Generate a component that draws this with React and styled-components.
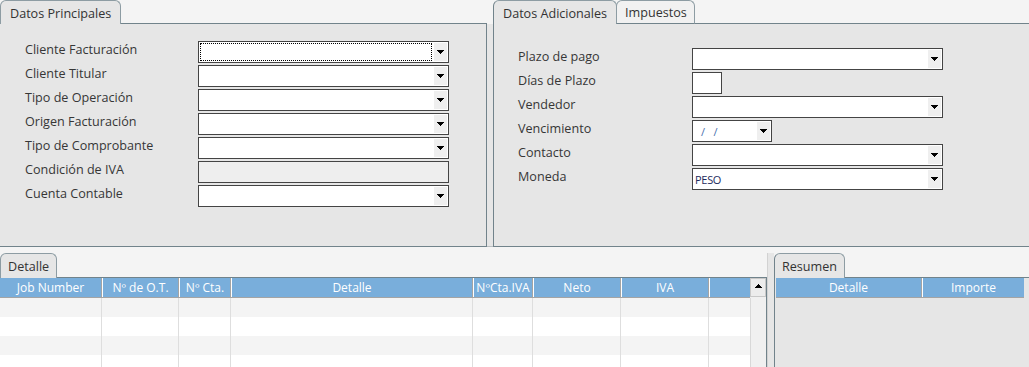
import React from "react";
import styled, { createGlobalStyle, css } from "styled-components";

const line = "#71838b";
const tabLine = "#8d9ca3";

const GlobalStyle = createGlobalStyle`
  html, body {
    margin: 0;
    padding: 0;
    background: #f4f4f4;
  }
  body {
    font-family: "Open Sans", "DejaVu Sans", sans-serif;
    font-size: 12.6px;
    color: #333;
    overflow: hidden;
  }
`;

const Arrow = ({ up }) => (
  <svg width="7" height="4" viewBox="0 0 7 4" shapeRendering="crispEdges"
    style={up ? { transform: "rotate(180deg)" } : undefined}>
    <path d="M0 0H7V1H6V2H5V3H4V4H3V3H2V2H1V1H0Z" fill="#000" />
  </svg>
);

export default function App() {
  const mainRows = [
    { label: "Cliente Facturación", focus: true },
    { label: "Cliente Titular" },
    { label: "Tipo de Operación" },
    { label: "Origen Facturación" },
    { label: "Tipo de Comprobante" },
    { label: "Condición de IVA", disabled: true },
    { label: "Cuenta Contable" },
  ];
  const extraRows = [
    { label: "Plazo de pago" },
    { label: "Días de Plazo", w: 30, plain: true },
    { label: "Vendedor" },
    { label: "Vencimiento", w: 80, value: "/   /", date: true },
    { label: "Contacto" },
    { label: "Moneda", value: "PESO" },
  ];
  const cols = [
    ["Job Number", 102],
    ["Nº de O.T.", 77],
    ["Nº Cta.", 52],
    ["Detalle", 242],
    ["NºCta.IVA", 60],
    ["Neto", 88],
    ["IVA", 88],
    ["", 41],
  ];
  const template = cols.map((c) => c[1] + "px").join(" ");

  return (
    <Page>
      <GlobalStyle />
      <TopRow>
        <Panel $width={487}>
          <TabStrip>
            <Tab $active>Datos Principales</Tab>
            <TabFill />
          </TabStrip>
          <Body $right>
            <Form $pad="17px 0 0 25px" $labelWidth={173}>
              {mainRows.map((r) => (
                <FieldRow key={r.label}>
                  <Label>{r.label}</Label>
                  <Field {...r} />
                </FieldRow>
              ))}
            </Form>
          </Body>
        </Panel>
        <Splitter />
        <Panel>
          <TabStrip>
            <Tab $active $edge>Datos Adicionales</Tab>
            <Tab>Impuestos</Tab>
            <TabFill />
          </TabStrip>
          <Body $left>
            <Form $pad="24px 0 0 24px" $labelWidth={174}>
              {extraRows.map((r) => (
                <FieldRow key={r.label}>
                  <Label>{r.label}</Label>
                  <Field {...r} />
                </FieldRow>
              ))}
            </Form>
          </Body>
        </Panel>
      </TopRow>

      <BottomRow>
        <Panel $width={767}>
          <TabStrip $tall>
            <Tab $active $compact>Detalle</Tab>
            <TabFill />
          </TabStrip>
          <GridBody>
            <TableArea>
              <HeadRow style={{ gridTemplateColumns: template }}>
                {cols.map(([t], i) => (
                  <HeadCell key={i} $first={i === 0}>{t}</HeadCell>
                ))}
              </HeadRow>
              {[0, 1, 2, 3, 4].map((r) => (
                <DataRow key={r} $odd={r % 2 === 1} style={{ gridTemplateColumns: template }}>
                  {cols.map((_, i) => (
                    <DataCell key={i} />
                  ))}
                </DataRow>
              ))}
            </TableArea>
            <ScrollBar>
              <ScrollButton>
                <Arrow up />
              </ScrollButton>
              <ScrollTrack />
            </ScrollBar>
          </GridBody>
        </Panel>
        <Splitter $bottom />
        <Panel>
          <TabStrip $tall>
            <Tab $active $edge $compact>Resumen</Tab>
            <TabFill />
          </TabStrip>
          <SummaryBody>
            <HeadRow style={{ gridTemplateColumns: "146px 102px", width: "248px" }}>
              <HeadCell $first>Detalle</HeadCell>
              <HeadCell>Importe</HeadCell>
            </HeadRow>
          </SummaryBody>
        </Panel>
      </BottomRow>
    </Page>
  );
}

function Field({ w = 251, focus, disabled, plain, value, date }) {
  return (
    <Box $w={w} $disabled={disabled}>
      <Value $focus={focus} $date={date}>{value}</Value>
      {!disabled && !plain && (
        <DropButton>
          <Arrow />
        </DropButton>
      )}
    </Box>
  );
}

const Page = styled.div`
  width: 1029px;
  height: 367px;
  display: flex;
  flex-direction: column;
  gap: 6px;
  overflow: hidden;
`;

const TopRow = styled.div`
  display: flex;
  height: 247px;
  flex: none;
`;

const BottomRow = styled.div`
  display: flex;
  flex: 1;
  min-height: 0;
`;

const Panel = styled.section`
  display: flex;
  flex-direction: column;
  width: ${(p) => (p.$width ? p.$width + "px" : "auto")};
  flex: ${(p) => (p.$width ? "none" : 1)};
  min-width: 0;
`;

const TabStrip = styled.div`
  display: flex;
  height: ${(p) => (p.$tall ? 25 : 24)}px;
  flex: none;
`;

const Tab = styled.div`
  box-sizing: border-box;
  height: 100%;
  padding: 1px ${(p) => (p.$compact ? 7 : p.$active ? 9 : 8)}px 0;
  display: flex;
  align-items: center;
  border: 1px solid ${tabLine};
  border-radius: 6px 6px 0 0;
  white-space: nowrap;
  font-size: 12.6px;
  color: #333;
  ${(p) =>
    p.$active
      ? css`
          background: #e6e6e6;
          border-bottom: none;
          ${p.$edge && css`border-left-color: ${line};`}
        `
      : css`
          background: #f1f1f1;
          border-bottom-color: ${line};
          margin-left: -1px;
          padding-right: 7px;
        `}
`;

const TabFill = styled.div`
  flex: 1;
  border-bottom: 1px solid ${line};
`;

const Body = styled.div`
  flex: 1;
  background: #e6e6e6;
  border-bottom: 1px solid ${line};
  ${(p) => p.$right && css`border-right: 1px solid ${line};`}
  ${(p) => p.$left && css`border-left: 1px solid ${line};`}
`;

const Splitter = styled.div`
  width: ${(p) => (p.$bottom ? 7 : 6)}px;
  flex: none;
  box-sizing: border-box;
  ${(p) =>
    p.$bottom
      ? css`
          background: #e6e6e6;
          border-left: 1px solid #d2d2d2;
        `
      : css`
          background: linear-gradient(#f4f4f4 0 24px, #e6e6e6 24px);
          border-bottom: 1px solid #b9bec1;
        `}
`;

const Form = styled.div`
  padding: ${(p) => p.$pad};
  display: grid;
  grid-template-columns: ${(p) => p.$labelWidth}px auto;
  justify-content: start;
  row-gap: 2px;
`;

const FieldRow = styled.div`
  display: contents;
`;

const Label = styled.div`
  font-size: 12.6px;
  line-height: 16px;
  padding-top: 1px;
  color: #363636;
  white-space: nowrap;
  align-self: start;
`;

const Box = styled.div`
  box-sizing: border-box;
  width: ${(p) => p.$w}px;
  height: 22px;
  border: 1px solid #444;
  padding: 1px;
  display: flex;
  background: ${(p) => (p.$disabled ? "#eeeeee" : "#fff")};
`;

const Value = styled.div`
  flex: 1;
  box-sizing: border-box;
  margin-right: 2px;
  border: 1px ${(p) => (p.$focus ? "dotted #000" : "solid transparent")};
  display: flex;
  align-items: center;
  font-size: 11px;
  white-space: pre;
  letter-spacing: ${(p) => (p.$date ? "0" : "-0.3px")};
  color: ${(p) => (p.$date ? "#4a6fae" : "#1d2b5e")};
  padding-left: ${(p) => (p.$date ? 6 : 0)}px;
`;

const DropButton = styled.div`
  width: 13px;
  flex: none;
  background: #efefef;
  display: flex;
  align-items: center;
  justify-content: center;
`;

const GridBody = styled.div`
  flex: 1;
  display: flex;
  border-right: 1px solid ${line};
  min-height: 0;
  overflow: hidden;
`;

const TableArea = styled.div`
  width: 750px;
  flex: none;
  background: #fff;
`;

const HeadRow = styled.div`
  display: grid;
  height: 19px;
  background: #79aedb;
  border-bottom: 1px solid #a4a4a4;
`;

const HeadCell = styled.div`
  box-sizing: border-box;
  display: flex;
  align-items: center;
  justify-content: center;
  color: #fff;
  font-size: 12px;
  white-space: nowrap;
  overflow: hidden;
  border-right: 1px solid #a4a4a4;
  ${(p) => !p.$first && css`border-left: 1px solid #fff;`}
  &:last-child {
    border-right: none;
  }
`;

const DataRow = styled.div`
  display: grid;
  height: 19px;
  background: ${(p) => (p.$odd ? "#fff" : "#f4f4f4")};
`;

const DataCell = styled.div`
  border-right: 1px solid #dedede;
  &:last-child {
    border-right: none;
  }
`;

const ScrollBar = styled.div`
  width: 16px;
  flex: none;
  display: flex;
  flex-direction: column;
  background: #f0f0f0;
`;

const ScrollButton = styled.div`
  box-sizing: border-box;
  height: 19px;
  border: 1px solid #c8c8c8;
  background: #ececec;
  display: flex;
  align-items: center;
  justify-content: center;
  padding-bottom: 3px;
`;

const ScrollTrack = styled.div`
  flex: 1;
  margin-top: 1px;
  border-left: 1px solid #d8d8d8;
  background: #f0f0f0;
`;

const SummaryBody = styled.div`
  flex: 1;
  background: #e6e6e6;
  border-left: 1px solid ${line};
  padding-left: 1px;
`;
